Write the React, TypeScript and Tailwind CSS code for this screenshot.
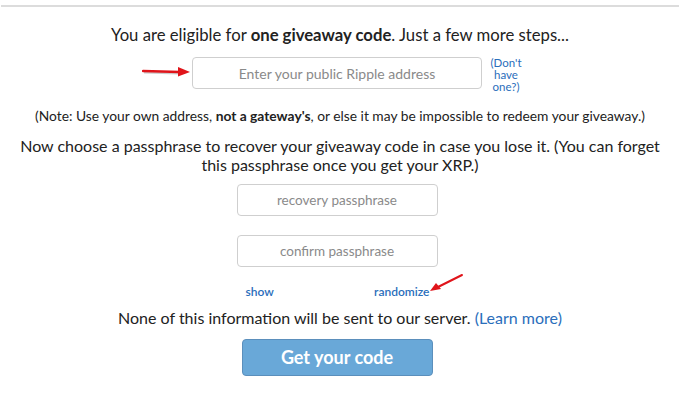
import React from "react";

const font = { fontFamily: "Lato, 'Open Sans', sans-serif" };

export default function App() {
  return (
    <div className="w-[680px] h-[403px] bg-white text-[#222] overflow-hidden" style={font}>
      <div className="pt-[5px] px-px">
        <div className="h-[2px] bg-[#dcdcdc]" />
      </div>
      <div className="flex flex-col items-center">
        <p className="mt-[18px] text-[16.7px] leading-[20px] text-center">
          You are eligible for <b>one giveaway code</b>. Just a few more steps...
        </p>
        <div className="relative mt-[12px] ml-[-6px]">
          <svg className="absolute left-[-50px] top-[9px]" width="50" height="12" viewBox="0 0 50 12">
            <line x1="2" y1="6.5" x2="38" y2="7.5" stroke="#999" strokeWidth="2" opacity="0.5" />
            <line x1="1" y1="5" x2="38" y2="6" stroke="#e0141a" strokeWidth="2.5" strokeLinecap="round" />
            <polygon points="36,1 48,6 36,10.5" fill="#e0141a" />
          </svg>
          <div className="w-[290px] h-[32px] border border-[#cfcfcf] rounded-[4px] flex items-center justify-center text-[14px] text-[#8a8a8a]">
            Enter your public Ripple address
          </div>
          <div className="absolute left-[296px] top-[0px] text-[11.5px] leading-[12px] text-[#2a6ebb] text-center w-[36px]">
            (Don't<br />have<br />one?)
          </div>
        </div>
        <p className="mt-[19px] text-[13.8px] leading-[16px] text-center">
          (Note: Use your own address, <b>not a gateway's</b>, or else it may be impossible to redeem your giveaway.)
        </p>
        <p className="mt-[12px] text-[16px] leading-[19px] text-center w-[660px]">
          Now choose a passphrase to recover your giveaway code in case you lose it. (You can forget this passphrase once you get your XRP.)
        </p>
        <div className="mt-[10px] ml-[-6px] w-[201px] h-[32px] border border-[#cfcfcf] rounded-[4px] flex items-center justify-center text-[13.5px] text-[#8a8a8a]">
          recovery passphrase
        </div>
        <div className="mt-[19px] ml-[-6px] w-[201px] h-[32px] border border-[#cfcfcf] rounded-[4px] flex items-center justify-center text-[13.5px] text-[#8a8a8a]">
          confirm passphrase
        </div>
        <div className="relative mt-[18px] ml-[-6px] w-[201px] flex justify-between pl-[9px] pr-[8px] text-[12px] leading-[14px] text-[#2a6ebb] font-semibold">
          <span>show</span>
          <span>randomize</span>
          <svg className="absolute left-[193px] top-[-12px]" width="34" height="20" viewBox="0 0 34 20">
            <line x1="32" y1="2" x2="8" y2="14" stroke="#e0141a" strokeWidth="2" strokeLinecap="round" />
            <polygon points="0,18 6,10 11,16" fill="#e0141a" />
          </svg>
        </div>
        <p className="mt-[9px] text-[16px] leading-[19px] text-center">
          None of this information will be sent to our server. <span className="text-[#2a6ebb]">(Learn more)</span>
        </p>
        <button className="mt-[12px] ml-[-6px] w-[191px] h-[37px] rounded-[4px] bg-[#69a8d8] border border-[#5b8fbc] text-white font-bold text-[18px]">
          Get your code
        </button>
      </div>
    </div>
  );
}
